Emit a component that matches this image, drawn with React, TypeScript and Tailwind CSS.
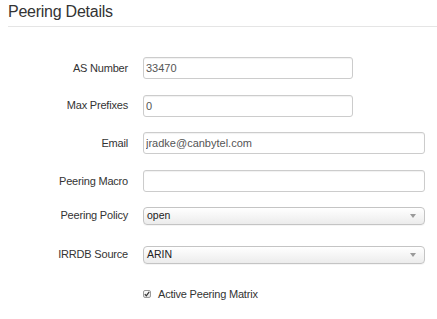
import React from "react";

const labelCls =
  "text-right text-[11px] tracking-[-0.2px] text-[#333]";

const inputCls =
  "h-[22px] rounded-[3px] border border-[#cccccc] bg-white px-[2px] text-[11px] text-[#555] shadow-[inset_0_1px_1px_rgba(0,0,0,0.06)] outline-none";

const Field = ({ label, value, wide }: { label: string; value: string; wide?: boolean }) => (
  <>
    <div className={labelCls}>{label}</div>
    <input
      readOnly
      value={value}
      className={`${inputCls} ${wide ? "w-[282px]" : "w-[210px]"}`}
    />
  </>
);

const Select = ({ label, value }: { label: string; value: string }) => (
  <>
    <div className={labelCls}>{label}</div>
    <div className="flex h-[18px] w-[282px] items-center justify-between rounded-[4px] border border-[#c4c4c4] bg-gradient-to-b from-white to-[#ececec] pl-[3px] pr-[8px] text-[10.5px] text-[#222] shadow-[0_1px_0_rgba(0,0,0,0.04)]">
      <span>{value}</span>
      <svg width="6" height="4" viewBox="0 0 6 4">
        <path d="M0 0 L6 0 L3 4 Z" fill="#9a9a9a" />
      </svg>
    </div>
  </>
);

export default function App() {
  return (
    <div
      className="h-[319px] w-[437px] overflow-hidden bg-white"
      style={{ fontFamily: '"Liberation Sans", Arial, sans-serif' }}
    >
      {/* Heading */}
      <h2 className="ml-[8px] mt-[2px] border-b border-[#e5e5e5] pb-[4px] text-[16px] leading-[20px] tracking-[-0.25px] text-[#333]">
        Peering Details
      </h2>

      {/* Form */}
      <div className="mt-[30px] grid grid-cols-[128px_1fr] items-center gap-x-[15px]">
        <Field label="AS Number" value="33470" />
        <div className="col-span-2 h-[15.7px]" />
        <Field label="Max Prefixes" value="0" />
        <div className="col-span-2 h-[15.7px]" />
        <Field label="Email" value="jradke@canbytel.com" wide />
        <div className="col-span-2 h-[15.7px]" />
        <Field label="Peering Macro" value="" wide />
        <div className="col-span-2 h-[14.5px]" />
        <Select label="Peering Policy" value="open" />
        <div className="col-span-2 h-[21px]" />
        <Select label="IRRDB Source" value="ARIN" />
        <div className="col-span-2 h-[22px]" />
        <div />
        <label className="flex items-center gap-[7px] text-[11px] tracking-[-0.2px] text-[#333]">
          <span className="flex h-[8px] w-[8px] items-center justify-center rounded-[2px] border border-[#9a9a9a] bg-gradient-to-b from-white to-[#e2e2e2]">
            <svg width="6" height="6" viewBox="0 0 6 6">
              <path d="M0.8 3.2 L2.3 4.8 L5.2 0.9" stroke="#333" strokeWidth="1.2" fill="none" />
            </svg>
          </span>
          Active Peering Matrix
        </label>
      </div>
    </div>
  );
}
